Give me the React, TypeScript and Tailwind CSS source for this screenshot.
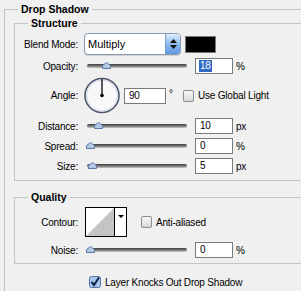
import React from "react";

const Label = ({ children }: { children: React.ReactNode }) => (
  <div className="w-[63px] shrink-0 text-right">{children}</div>
);

const Heading = ({ children }: { children: React.ReactNode }) => (
  <div className="-mt-[7px] ml-[13px] w-fit bg-[#f0f0f0] px-[3px] h-[13px] leading-[13px] text-[10.5px] font-bold tracking-normal">
    {children}
  </div>
);

const Slider = ({ pos }: { pos: number }) => (
  <div className="relative ml-[9px] h-[16px] w-[100px] shrink-0">
    <div className="absolute left-0 right-0 top-[6px] h-[4px] rounded-full bg-gradient-to-b from-[#3c3c3c] via-[#777777] to-[#c8c8c8]" />
    <svg
      className="absolute top-[4px]"
      style={{ left: pos }}
      width="9"
      height="7"
      viewBox="0 0 9 7"
    >
      <path
        d="M4.5 0.5 L8.5 3.5 L8.5 6.5 L0.5 6.5 L0.5 3.5 Z"
        fill="#b4c8e6"
        stroke="#5c7aa8"
        strokeWidth="1"
      />
    </svg>
  </div>
);

const NumBox = ({
  value,
  w = "w-[38px]",
  ml = "ml-[8px]",
  selected = false,
}: {
  value: string;
  w?: string;
  ml?: string;
  selected?: boolean;
}) => (
  <div
    className={`${ml} ${w} h-[16px] shrink-0 border border-[#7a7a7a] bg-white pl-[3px] flex items-center leading-[12px]`}
  >
    {selected ? (
      <span className="bg-[#316ac5] text-white px-[1px]">{value}</span>
    ) : (
      <span className="px-[1px]">{value}</span>
    )}
  </div>
);

const CheckBox = ({ checked = false }: { checked?: boolean }) =>
  checked ? (
    <svg width="12" height="12" viewBox="0 0 12 12" className="shrink-0">
      <rect x="0.5" y="0.5" width="11" height="11" rx="2" fill="#a9c6ea" stroke="#4f74a8" />
      <path d="M2.5 6 L5 9 L10 1.5" fill="none" stroke="#10224a" strokeWidth="2" />
    </svg>
  ) : (
    <div className="h-[12px] w-[11px] shrink-0 rounded-[2px] border border-[#8c8c8c] bg-gradient-to-b from-[#f8f8f8] to-[#d8d8d8]" />
  );

export default function App() {
  return (
    <div className="h-[291px] w-[301px] overflow-hidden bg-[#f0f0f0] font-['Liberation_Sans',Arial,sans-serif] text-[10px] tracking-[-0.2px] text-black">
      <div className="ml-[4px] mt-[9px] w-[400px] h-[400px] border-l border-t border-[#c4c4c4]">
        <Heading>Drop Shadow</Heading>

        <div className="ml-[9px] mt-[7px] w-[400px] border-l border-t border-b border-[#c4c4c4] pb-[6px]">
          <Heading>Structure</Heading>

          <div className="mt-[3px] flex h-[22px] items-center">
            <Label>Blend Mode:</Label>
            <div className="ml-[6px] flex h-[22px] w-[97px] shrink-0 rounded-[4px] border border-[#8b9bb6] bg-white shadow-[0_1px_1px_rgba(0,0,0,0.15)]">
              <div className="flex flex-1 items-center pl-[3px] text-[11px] tracking-normal">Multiply</div>
              <div className="flex w-[15px] flex-col items-center justify-center gap-[2px] rounded-r-[3px] border-l border-[#7a9cc8] bg-gradient-to-b from-[#e0eefc] via-[#8fbdf0] to-[#5a96e0]">
                <svg width="7" height="4" viewBox="0 0 7 4">
                  <path d="M3.5 0 L7 4 L0 4 Z" fill="#111" />
                </svg>
                <svg width="7" height="4" viewBox="0 0 7 4">
                  <path d="M0 0 L7 0 L3.5 4 Z" fill="#111" />
                </svg>
              </div>
            </div>
            <div className="ml-[4px] h-[17px] w-[31px] shrink-0 border border-[#7a7a7a] bg-black" />
          </div>

          <div className="mt-[3px] flex h-[16px] items-center">
            <Label>Opacity:</Label>
            <Slider pos={15} />
            <NumBox value="18" selected />
            <span className="ml-[3px]">%</span>
          </div>

          <div className="mt-[3px] flex h-[37px] items-center">
            <Label>Angle:</Label>
            <svg width="36" height="37" viewBox="0 0 36 37" className="ml-[6px] shrink-0">
              <circle cx="18" cy="18.5" r="17" fill="#f8f8fa" stroke="#4e5670" strokeWidth="1.6" />
              <circle cx="18" cy="18.5" r="15.5" fill="none" stroke="#d4d8e2" strokeWidth="1" />
              <line x1="18" y1="18.5" x2="18" y2="2" stroke="#000" strokeWidth="1.3" />
              <circle cx="18" cy="18.5" r="1.8" fill="#000" />
            </svg>
            <NumBox value="90" w="w-[42px]" ml="ml-[4px]" />
            <span className="ml-[3px] w-[14px] shrink-0 self-start mt-[12px] leading-[10px]">°</span>
            <CheckBox />
            <span className="ml-[4px]">Use Global Light</span>
          </div>

          <div className="mt-[4px] flex h-[16px] items-center">
            <Label>Distance:</Label>
            <Slider pos={7} />
            <NumBox value="10" />
            <span className="ml-[3px]">px</span>
          </div>

          <div className="mt-[4px] flex h-[16px] items-center">
            <Label>Spread:</Label>
            <Slider pos={-1} />
            <NumBox value="0" />
            <span className="ml-[3px]">%</span>
          </div>

          <div className="mt-[4px] flex h-[16px] items-center">
            <Label>Size:</Label>
            <Slider pos={1} />
            <NumBox value="5" />
            <span className="ml-[3px]">px</span>
          </div>
        </div>

        <div className="ml-[9px] mt-[16px] w-[400px] border-l border-t border-b border-[#c4c4c4] pb-[5px]">
          <Heading>Quality</Heading>

          <div className="mt-[3px] flex h-[30px] items-center">
            <Label>Contour:</Label>
            <div className="ml-[7px] flex h-[30px] w-[42px] shrink-0 border border-black bg-white">
              <svg width="28" height="28" viewBox="0 0 28 28" className="shrink-0">
                <path d="M0 28 L28 0 L28 28 Z" fill="#c4c4c4" />
              </svg>
              <div className="flex flex-1 justify-center border-l border-black pt-[7px]">
                <svg width="6" height="3" viewBox="0 0 6 3">
                  <path d="M0 0 L6 0 L3 3 Z" fill="#000" />
                </svg>
              </div>
            </div>
            <div className="ml-[14px]">
              <CheckBox />
            </div>
            <span className="ml-[4px]">Anti-aliased</span>
          </div>

          <div className="mt-[5px] flex h-[16px] items-center">
            <Label>Noise:</Label>
            <Slider pos={-1} />
            <NumBox value="0" />
            <span className="ml-[3px]">%</span>
          </div>
        </div>

        <div className="ml-[84px] mt-[12px] flex h-[12px] items-center">
          <CheckBox checked />
          <span className="ml-[4px]">Layer Knocks Out Drop Shadow</span>
        </div>
      </div>
    </div>
  );
}
